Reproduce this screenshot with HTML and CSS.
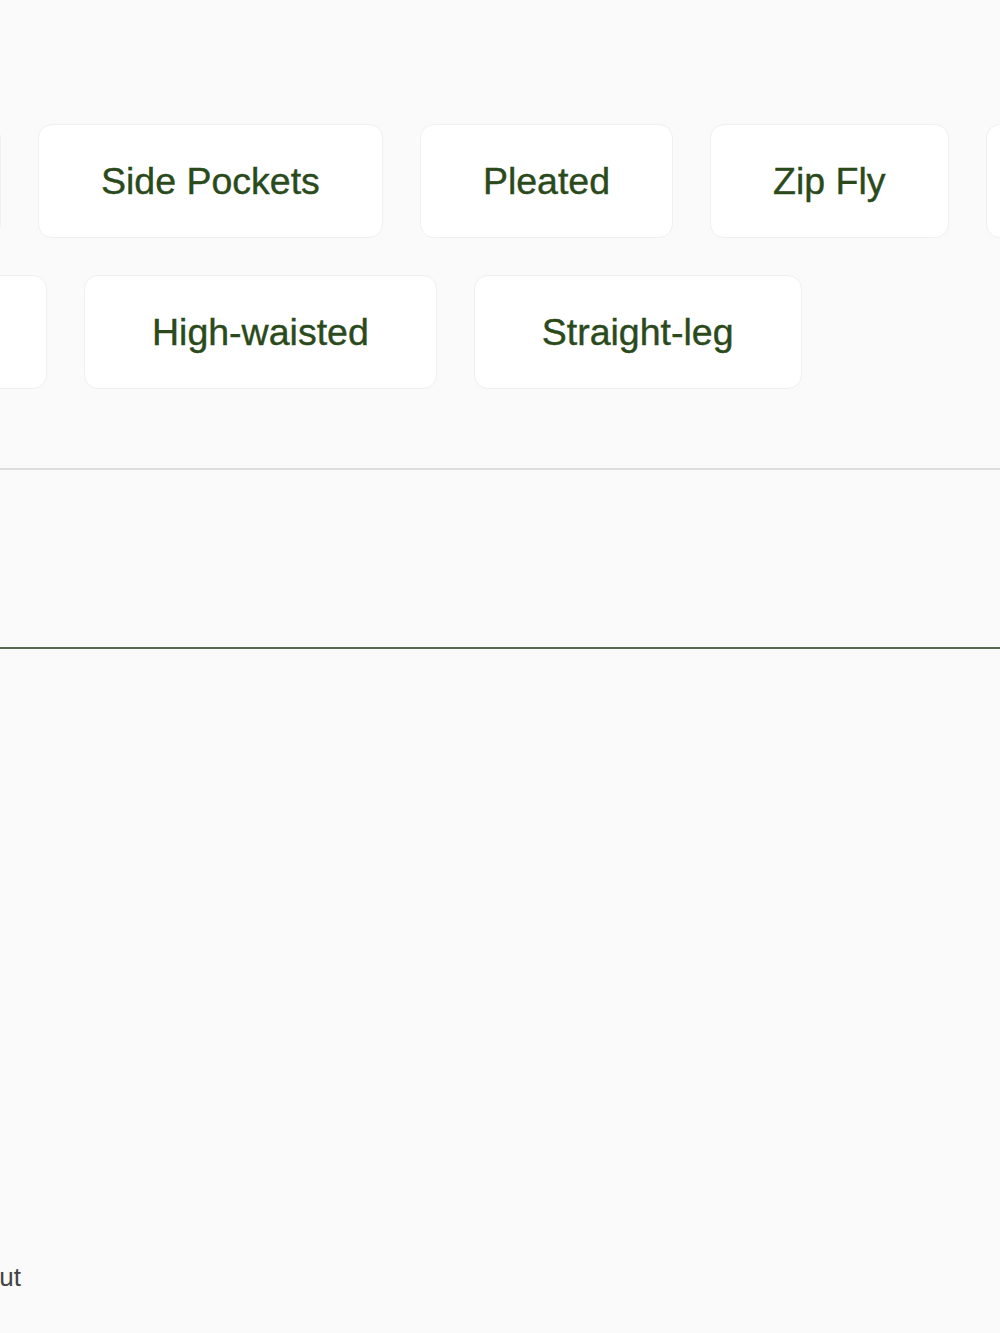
FILE: index.html
```html
<!DOCTYPE html>
<html lang="en">
<head>
    <meta charset="UTF-8">
    <meta name="viewport" content="width=device-width, initial-scale=1.0">
    <title>Filter Details</title>
    <link rel="stylesheet" href="styles.css">
</head>
<body>
    <section class="details">
        <div class="chip-row row-one">
            <span class="chip chip-edge-a"></span>
            <button class="chip">Side Pockets</button>
            <button class="chip">Pleated</button>
            <button class="chip">Zip Fly</button>
            <span class="chip chip-edge-b"></span>
        </div>
        <div class="chip-row row-two">
            <span class="chip chip-edge-c"></span>
            <button class="chip">High-waisted</button>
            <button class="chip">Straight-leg</button>
        </div>
    </section>

    <div class="divider"></div>
    <div class="spacer"></div>
    <div class="rule"></div>

    <footer class="footer">
        <a class="footer-link" href="#">About</a>
    </footer>
</body>
</html>
```

FILE: styles.css
```css
html, body {
    margin: 0;
    padding: 0;
}
body {
    background-color: #fafafa;
    font-family: "Liberation Sans", Arial, sans-serif;
    width: 1000px;
    height: 1333px;
    overflow: hidden;
}
.details {
    padding-top: 124px;
    display: flex;
    flex-direction: column;
    gap: 37px;
}
.chip-row {
    display: flex;
    gap: 37px;
    margin-left: -300px;
    white-space: nowrap;
}
.chip {
    box-sizing: border-box;
    height: 114px;
    padding: 0 62px;
    background-color: #fff;
    border: 1px solid #f0f0f0;
    border-radius: 14px;
    color: #2b4a1c;
    font-family: inherit;
    font-size: 37.5px;
    -webkit-text-stroke: 0.4px #2b4a1c;
    flex-shrink: 0;
    cursor: pointer;
}
.chip-edge-a {
    width: 301px;
}
.chip-edge-b {
    width: 240px;
}
.chip-edge-c {
    width: 347px;
}
.row-two .chip {
    padding: 0 67px;
}
.row-two .chip-edge-c {
    padding: 0;
}
.divider {
    margin-top: 79px;
    height: 2px;
    background-color: #dedede;
}
.spacer {
    height: 177px;
}
.rule {
    height: 2px;
    background-color: #56684f;
}
.footer {
    padding-top: 613px;
}
.footer-link {
    display: inline-block;
    margin-left: -47px;
    font-size: 26px;
    color: #444;
    text-decoration: none;
}
```
